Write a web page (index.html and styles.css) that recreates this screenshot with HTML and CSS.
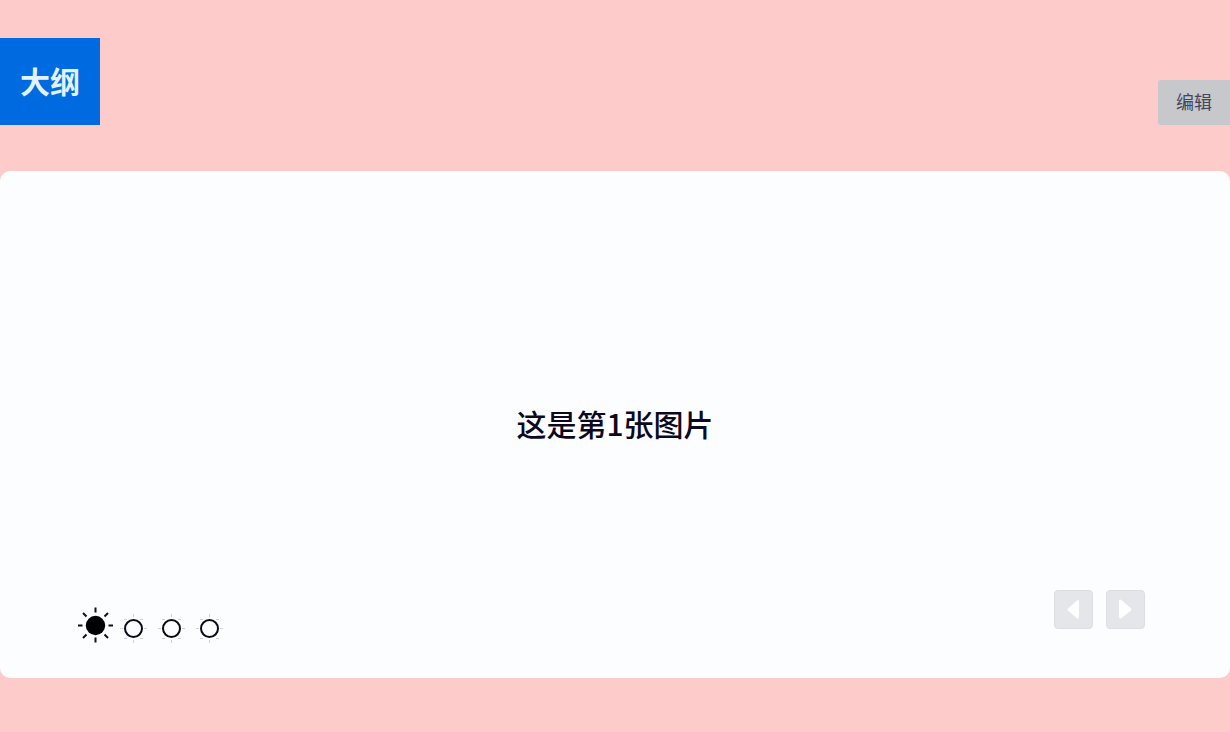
FILE: index.html
```
<!DOCTYPE html>
<html lang="zh-CN">
<head>
  <meta charset="UTF-8" />
  <meta name="viewport" content="width=device-width, initial-scale=1.0"/>
  <title>大纲</title>
  <link rel="stylesheet" href="styles.css">
</head>
<body>

  <!-- top bar -->
  <header class="toolbar">
    <button class="outline-btn" type="button">大纲</button>
    <button class="edit-btn" type="button">编辑</button>
  </header>

  <!-- slide -->
  <main class="slide">
    <h1 class="slide-title">这是第1张图片</h1>

    <div class="slide-footer">
      <!-- slide indicators -->
      <nav class="dots">
        <button class="dot" type="button" aria-label="1">
          <svg viewBox="0 0 38 38">
            <circle class="sun" cx="19.500" cy="19.500" r="9.700"/>
            <path class="rays" d="M19.500 1.500v5M19.500 31.500v5M2 19.500h4.500M32.500 19.500H37M7 7l3.500 3.500M32 7l-3.500 3.500M7 32l3.500-3.500M32 32l-3.500-3.500"/>
          </svg>
        </button>
        <button class="dot" type="button" aria-label="2">
          <svg viewBox="0 0 38 38">
            <path class="faint" d="M19.500 8v3M19.500 34v3M6 22.500h3M30 22.500h3M10 13.500h3M29 13.500h-3M10 32.500h3M29 32.500h-3"/>
            <circle class="ring" cx="19.500" cy="22.500" r="8.500"/>
          </svg>
        </button>
        <button class="dot" type="button" aria-label="3">
          <svg viewBox="0 0 38 38">
            <path class="faint" d="M19.500 8v3M19.500 34v3M6 22.500h3M30 22.500h3M10 13.500h3M29 13.500h-3M10 32.500h3M29 32.500h-3"/>
            <circle class="ring" cx="19.500" cy="22.500" r="8.500"/>
          </svg>
        </button>
        <button class="dot" type="button" aria-label="4">
          <svg viewBox="0 0 38 38">
            <path class="faint" d="M19.500 8v3M19.500 34v3M6 22.500h3M30 22.500h3M10 13.500h3M29 13.500h-3M10 32.500h3M29 32.500h-3"/>
            <circle class="ring" cx="19.500" cy="22.500" r="8.500"/>
          </svg>
        </button>
      </nav>

      <!-- prev / next -->
      <div class="arrows">
        <button class="arrow" type="button" aria-label="上一张">
          <svg viewBox="0 0 37 37"><path d="M24 10.500v15q0 3-2.500 1.500l-8-7q-2-1.500 0-3l8-7q2.500-2 2.500.5z"/></svg>
        </button>
        <button class="arrow" type="button" aria-label="下一张">
          <svg viewBox="0 0 37 37"><path d="M12 10.500v15q0 3 2.500 1.500l9-7q2-1.500 0-3l-9-8q-2.500-1.500-2.500 1.500z"/></svg>
        </button>
      </div>
    </div>
  </main>

</body>
</html>
```

FILE: styles.css
```
* {
  box-sizing: border-box;
}
body {
  display: flex;
  flex-direction: column;
  min-height: 100vh;
  margin: 0;
  padding-bottom: 54px;
  background-color: #fecbcb;
  font-family: "Noto Sans CJK SC", sans-serif;
}
button {
  padding: 0;
  border: none;
  background: none;
  font-family: inherit;
  cursor: pointer;
}
svg {
  display: block;
  width: 100%;
  height: 100%;
}

/* top bar */
.toolbar {
  display: flex;
  justify-content: space-between;
  align-items: flex-end;
  padding: 38px 0 46px;
}
.outline-btn {
  width: 100px;
  height: 87px;
  padding-bottom: 4px;
  background-color: #006be0;
  color: #e2f3ff;
  font-size: 30px;
  font-weight: 700;
}
.edit-btn {
  width: 72px;
  height: 45px;
  padding-bottom: 4px;
  border-radius: 3px 0 0 3px;
  background-color: #c6c8cc;
  color: #454560;
  font-size: 18px;
}

/* slide */
.slide {
  flex: 1;
  display: grid;
  grid-template-rows: 1fr auto 1fr;
  border-radius: 10px;
  background-color: #fcfdff;
}
.slide-title {
  grid-row: 2;
  margin: 0;
  padding-bottom: 4px;
  color: #0c0820;
  font-size: 30px;
  font-weight: 500;
  line-height: 40px;
  text-align: center;
}
.slide-footer {
  grid-row: 3;
  align-self: end;
  display: flex;
  justify-content: space-between;
  align-items: flex-start;
  padding: 0 85px 34px 76px;
}

/* indicators */
.dots {
  display: flex;
  padding-top: 16px;
}
.dot {
  width: 38px;
  height: 38px;
}
.sun {
  fill: #000;
}
.rays {
  fill: none;
  stroke: #101020;
  stroke-width: 2;
}
.ring {
  fill: none;
  stroke: #0a0a18;
  stroke-width: 2;
}
.faint {
  fill: none;
  stroke: #d0d0da;
  stroke-width: 1;
}

/* prev / next */
.arrows {
  display: flex;
  gap: 13px;
}
.arrow {
  width: 39px;
  height: 39px;
  border: 1px solid #dcdee1;
  border-radius: 4px;
  background-color: #e5e6e9;
}
.arrow path {
  fill: #fdfeff;
}
```
